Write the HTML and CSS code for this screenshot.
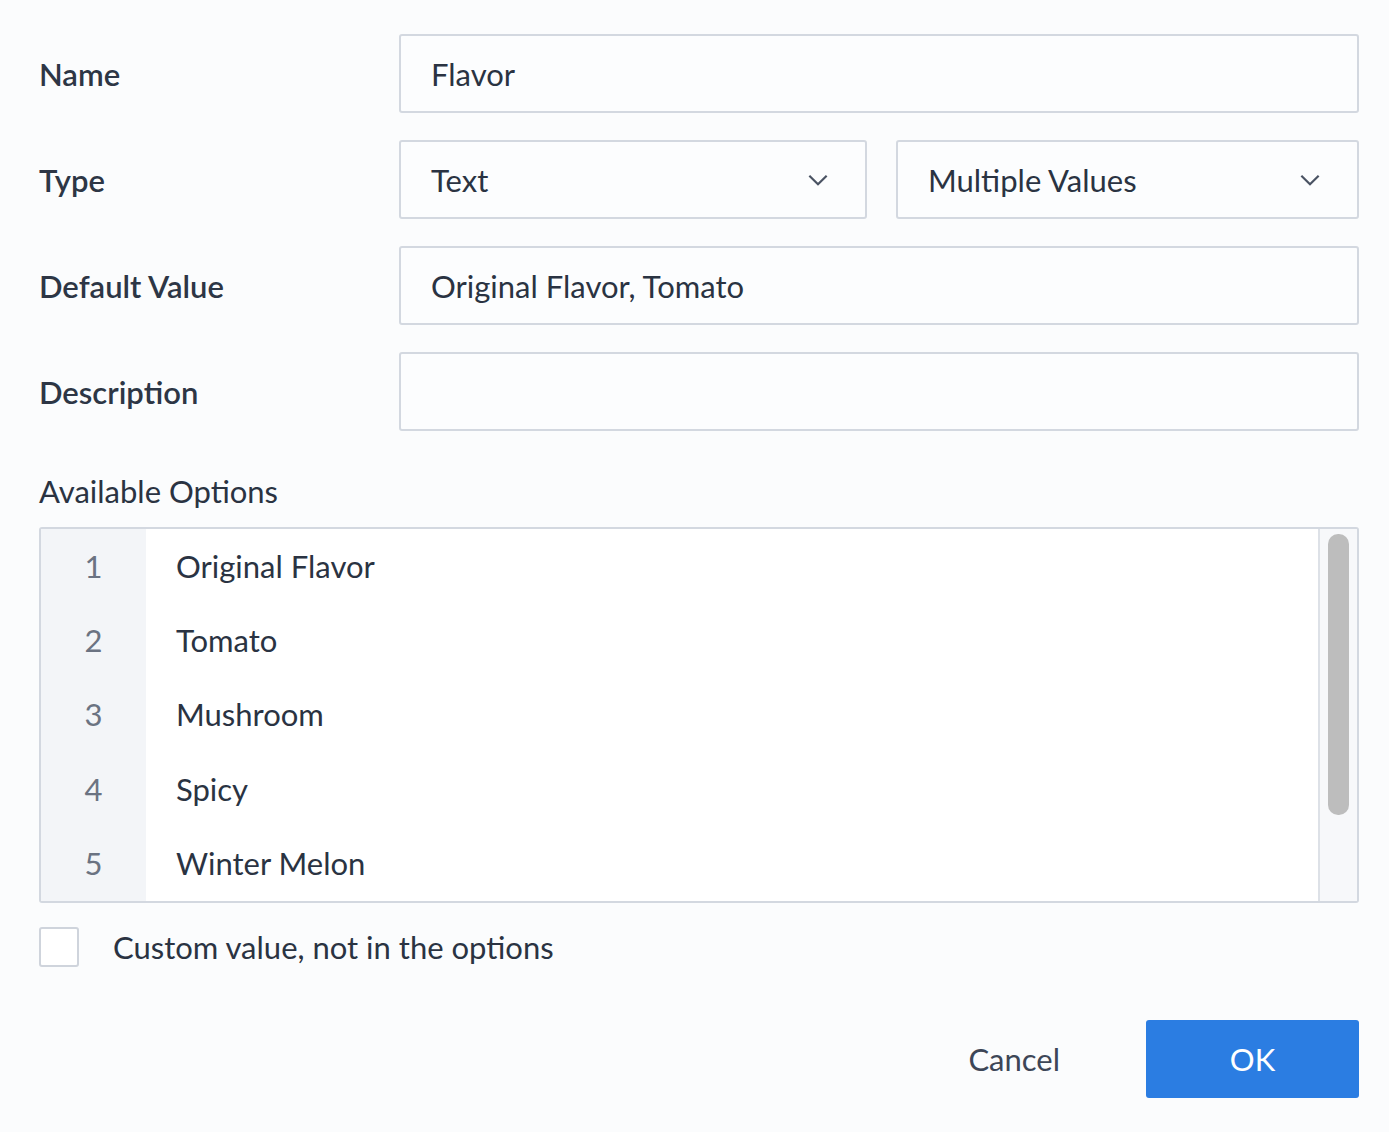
FILE: index.html
```html
<!DOCTYPE html>
<html lang="en">
<head>
  <meta charset="UTF-8" />
  <title>Edit Parameter</title>
  <link rel="stylesheet" href="styles.css">
</head>
<body>
  <div class="dialog">
    <!-- Parameter fields -->
    <div class="field">
      <label class="field-label">Name</label>
      <div class="input">Flavor</div>
    </div>
    <div class="field">
      <label class="field-label">Type</label>
      <div class="selects">
        <div class="input select">
          <span>Text</span>
          <svg class="chevron" viewBox="0 0 24 24"><path d="M4 8l8 8 8-8" /></svg>
        </div>
        <div class="input select">
          <span>Multiple Values</span>
          <svg class="chevron" viewBox="0 0 24 24"><path d="M4 8l8 8 8-8" /></svg>
        </div>
      </div>
    </div>
    <div class="field">
      <label class="field-label">Default Value</label>
      <div class="input">Original Flavor, Tomato</div>
    </div>
    <div class="field">
      <label class="field-label">Description</label>
      <div class="input"></div>
    </div>

    <!-- Options list -->
    <div class="section-title">Available Options</div>
    <div class="options">
      <div class="options-list">
        <div class="option"><span class="num">1</span><span class="text">Original Flavor</span></div>
        <div class="option"><span class="num">2</span><span class="text">Tomato</span></div>
        <div class="option"><span class="num">3</span><span class="text">Mushroom</span></div>
        <div class="option"><span class="num">4</span><span class="text">Spicy</span></div>
        <div class="option"><span class="num">5</span><span class="text">Winter Melon</span></div>
      </div>
      <div class="scrollbar"><div class="thumb"></div></div>
    </div>

    <label class="check">
      <span class="box"></span>
      Custom value, not in the options
    </label>

    <div class="actions">
      <button class="btn-cancel">Cancel</button>
      <button class="btn-ok">OK</button>
    </div>
  </div>
</body>
</html>
```

FILE: styles.css
```css
* { box-sizing: border-box; }
body {
  margin: 0;
  background: #fbfcfd;
  font-family: 'Lato', 'Noto Sans', sans-serif;
  color: #2a3342;
}
.dialog {
  width: 1389px;
  height: 1132px;
  padding: 34px 30px 0 39px;
}
.field {
  display: flex;
  align-items: center;
  height: 79px;
  margin-bottom: 27px;
}
.field-label {
  width: 360px;
  flex-shrink: 0;
  font-size: 31px;
  font-weight: 600;
  color: #2d3645;
}
.input {
  flex: 1;
  height: 79px;
  display: flex;
  align-items: center;
  padding: 0 30px;
  background: #fcfdfe;
  border: 2px solid #d3d8e0;
  border-radius: 3px;
  font-size: 31px;
}
.selects {
  flex: 1;
  display: grid;
  grid-template-columns: 468px 1fr;
  gap: 29px;
}
.select {
  justify-content: space-between;
  padding-right: 34px;
}
.chevron {
  width: 26px;
  height: 26px;
  fill: none;
  stroke: #4a5363;
  stroke-width: 2;
}
.section-title {
  margin-top: 39px;
  font-size: 31px;
  height: 42px;
  line-height: 42px;
}
.options {
  margin-top: 15px;
  display: flex;
  height: 376px;
  border: 2px solid #d3d8e0;
  border-radius: 3px;
  background: #fff;
}
.options-list {
  flex: 1;
  background: linear-gradient(to right, #f3f5f8 105px, #fff 105px);
}
.option {
  display: flex;
  align-items: center;
  height: 74.2px;
  font-size: 31px;
}
.option .num {
  width: 105px;
  text-align: center;
  color: #6b7382;
}
.option .text { padding-left: 30px; }
.scrollbar {
  width: 39px;
  border-left: 2px solid #dde1e7;
  background: #f7f8fa;
  padding: 5px 8px 0 8px;
}
.thumb {
  height: 281px;
  background: #bdbdbd;
  border-radius: 10px;
}
.check {
  display: flex;
  align-items: center;
  margin-top: 24px;
  font-size: 31px;
}
.box {
  width: 40px;
  height: 40px;
  border: 2px solid #cfd4dc;
  border-radius: 3px;
  background: #fff;
  margin-right: 34px;
}
.actions {
  display: flex;
  justify-content: flex-end;
  align-items: center;
  margin-top: 53px;
}
.actions button {
  font-family: inherit;
  font-size: 31px;
  border: none;
  cursor: pointer;
}
.btn-cancel {
  background: none;
  color: #3d4657;
  margin-right: 80px;
}
.btn-ok {
  width: 213px;
  height: 78px;
  background: #2b7de2;
  color: #fff;
  border-radius: 3px;
}
```
